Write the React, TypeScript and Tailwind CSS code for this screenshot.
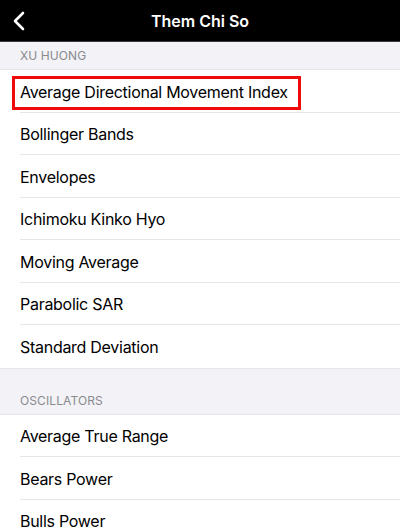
import React from "react";

const trend = [
  "Average Directional Movement Index",
  "Bollinger Bands",
  "Envelopes",
  "Ichimoku Kinko Hyo",
  "Moving Average",
  "Parabolic SAR",
  "Standard Deviation",
];
const osc = ["Average True Range", "Bears Power", "Bulls Power"];

function Row({ label, last, boxed }: { label: string; last?: boolean; boxed?: boolean }) {
  return (
    <div className="h-[42.5px] bg-white pl-5 flex">
      <div
        className={
          "flex-1 flex items-center relative pt-[2px] " + (last ? "" : "border-b border-[#e6e6ea]")
        }
      >
        <span className="text-[16px] text-black tracking-[-0.28px]">{label}</span>
        {boxed && (
          <div className="absolute left-[-8px] top-[6px] w-[289px] h-[34px] border-[3px] border-[#f00a0a]" />
        )}
      </div>
    </div>
  );
}

export default function App() {
  return (
    <div
      className="w-[400px] h-[528px] overflow-hidden bg-[#f2f2f7]"
      style={{ fontFamily: "Inter, 'Noto Sans', sans-serif" }}
    >
      <div className="h-[42px] bg-black border-b border-[#3a3a3c] flex items-center justify-center relative">
        <svg
          className="absolute left-[12px] top-[11px]"
          width="14"
          height="20"
          viewBox="0 0 14 20"
          fill="none"
        >
          <path d="M11 2 L3 10 L11 18" stroke="white" strokeWidth="2.6" strokeLinecap="round" strokeLinejoin="round" />
        </svg>
        <span className="text-white text-[16px] font-semibold">Them Chi So</span>
      </div>
      <div className="h-[28px] flex items-center pl-5 pt-[1px] border-b border-[#e6e6ea]">
        <span className="text-[12px] text-[#8a8a8e] tracking-[0.1px]">XU HUONG</span>
      </div>
      {trend.map((t, i) => (
        <Row key={t} label={t} last={i === trend.length - 1} boxed={i === 0} />
      ))}
      <div className="h-[47px] border-t border-[#e6e6ea] border-b flex items-end pb-[4px] pl-5">
        <span className="text-[12px] text-[#8a8a8e] tracking-[0.1px]">OSCILLATORS</span>
      </div>
      {osc.map((t) => (
        <Row key={t} label={t} />
      ))}
    </div>
  );
}
